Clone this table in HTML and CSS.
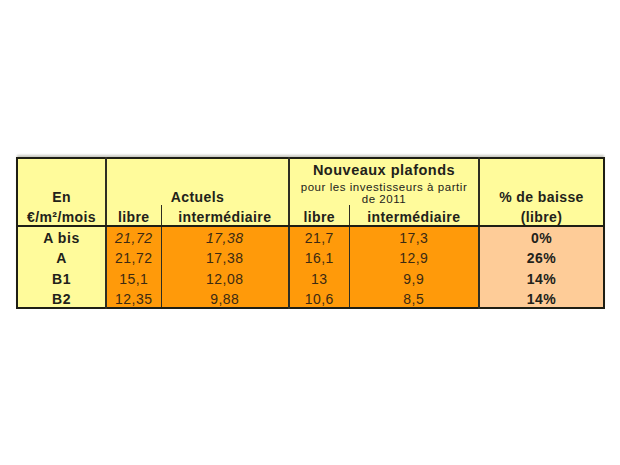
FILE: index.html
```html
<!DOCTYPE html>
<html lang="fr">
<head>
<meta charset="utf-8">
<title>Plafonds de loyers</title>
<link rel="stylesheet" href="styles.css">
</head>
<body>
<div class="page">
  <table class="grid">
    <colgroup>
      <col class="c-zone">
      <col class="c-lib">
      <col class="c-int">
      <col class="c-lib2">
      <col class="c-int2">
      <col class="c-pct">
    </colgroup>
    <thead>
      <tr class="h1">
        <th class="hy bot">En</th>
        <th class="hy bot grp" colspan="2">Actuels</th>
        <th class="hy top grp" colspan="2">
          <div class="big">Nouveaux plafonds</div>
          <div class="small">pour les investisseurs à partir<br>de 2011</div>
        </th>
        <th class="hy bot grp">% de baisse</th>
      </tr>
      <tr class="h2">
        <th class="hy">€/m²/mois</th>
        <th class="hy grp">libre</th>
        <th class="hy sep">intermédiaire</th>
        <th class="hy grp">libre</th>
        <th class="hy sep">intermédiaire</th>
        <th class="hy grp">(libre)</th>
      </tr>
    </thead>
    <tbody>
      <tr>
        <th class="zone">A bis</th>
        <td class="or grp it">21,72</td>
        <td class="or sep it">17,38</td>
        <td class="or grp">21,7</td>
        <td class="or sep">17,3</td>
        <td class="pc grp">0%</td>
      </tr>
      <tr>
        <th class="zone">A</th>
        <td class="or grp">21,72</td>
        <td class="or sep">17,38</td>
        <td class="or grp">16,1</td>
        <td class="or sep">12,9</td>
        <td class="pc grp">26%</td>
      </tr>
      <tr>
        <th class="zone">B1</th>
        <td class="or grp">15,1</td>
        <td class="or sep">12,08</td>
        <td class="or grp">13</td>
        <td class="or sep">9,9</td>
        <td class="pc grp">14%</td>
      </tr>
      <tr>
        <th class="zone">B2</th>
        <td class="or grp">12,35</td>
        <td class="or sep">9,88</td>
        <td class="or grp">10,6</td>
        <td class="or sep">8,5</td>
        <td class="pc grp">14%</td>
      </tr>
    </tbody>
  </table>
</div>
</body>
</html>
```

FILE: styles.css
```css
html, body {
  margin: 0;
  padding: 0;
  background: #ffffff;
}

.page {
  padding: 157px 0 0 16px;
}

.grid {
  border-collapse: collapse;
  table-layout: fixed;
  width: 587px;
  border: 2px solid #1e1e14;
  box-shadow: 0 -3px 2px -1px #c9c9c2;
  font-family: "Liberation Sans", Arial, sans-serif;
  font-size: 14px;
  letter-spacing: 0.4px;
  color: #22221a;
}

.c-zone { width: 89px; }
.c-lib { width: 55px; }
.c-int { width: 128px; }
.c-lib2 { width: 60px; }
.c-int2 { width: 130px; }
.c-pct { width: 125px; }

th, td {
  padding: 0;
  text-align: center;
  line-height: 16px;
  white-space: nowrap;
}

.hy {
  background: #fffb9b;
  font-weight: bold;
}

.h1 { height: 46px; }
.h2 { height: 21px; }

.h1 .bot {
  vertical-align: bottom;
  padding-bottom: 0;
}

.h1 .top {
  vertical-align: top;
  padding-top: 3px;
}

.big {
  font-size: 14.5px;
  line-height: 17px;
  letter-spacing: 0.5px;
}

.small {
  font-weight: normal;
  font-size: 11.5px;
  line-height: 11.5px;
  letter-spacing: 0.55px;
  padding-top: 3px;
}

.h2 th {
  border-bottom: 2px solid #1e1e14;
  vertical-align: middle;
  padding-top: 4px;
}

.grp { border-left: 2px solid #2e2e22; }
.sep { border-left: 1.5px solid #2e2e22; }

tbody tr { height: 20.5px; }

tbody th, tbody td {
  vertical-align: middle;
  padding-top: 3px;
}

.zone {
  background: #fffb9b;
  font-weight: bold;
  letter-spacing: 0.6px;
}

.or {
  background: #ff9a0a;
  color: #3c2a12;
  letter-spacing: 0.5px;
}

.it { font-style: italic; }

.pc {
  background: #fecc98;
  font-weight: bold;
  letter-spacing: 0.5px;
}
```
